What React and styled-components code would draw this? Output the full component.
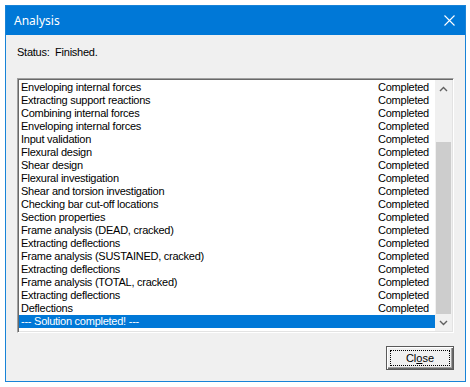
import React from "react"
import styled, { createGlobalStyle } from "styled-components"

const GlobalStyle = createGlobalStyle`
  html, body {
    margin: 0;
    background: #ffffff;
  }
  body {
    padding: 5px;
  }
`

const Window = styled.div`
  width: 461px;
  height: 377px;
  box-sizing: border-box;
  border: 1px solid #1883d7;
  background: #f0f0f0;
  display: flex;
  flex-direction: column;
  font-family: "Liberation Sans", Arial, sans-serif;
  font-size: 11px;
  letter-spacing: -0.25px;
  color: #000;
`

const TitleBar = styled.div`
  height: 29px;
  flex: none;
  background: #0078d7;
  color: #fff;
  display: flex;
  align-items: center;
  justify-content: space-between;
  padding: 0 10px 0 8px;
  font-family: "Noto Sans", sans-serif;
  font-size: 12px;
  letter-spacing: 0;

  svg {
    display: block;
  }
`

const Body = styled.div`
  flex: 1;
  display: flex;
  flex-direction: column;
  padding: 11px 11px 11px 11px;
`

const Status = styled.div`
  height: 13px;
  line-height: 13px;
  white-space: pre;
  margin-bottom: 19px;
`

const ListBox = styled.div`
  height: 255px;
  box-sizing: border-box;
  border-style: solid;
  border-width: 1px;
  border-color: #a0a0a0 #ffffff #ffffff #a0a0a0;
  box-shadow: inset 1px 1px 0 #696969, inset -1px -1px 0 #e3e3e3;
  padding: 1px;
  display: flex;
  background: #fff;
`

const Rows = styled.div`
  flex: 1;
  padding-top: 1px;
  display: flex;
  flex-direction: column;
`

const Row = styled.div`
  height: 13px;
  line-height: 13px;
  display: flex;
  justify-content: space-between;
  padding: 0 6px 0 2px;
  white-space: pre;
  background: ${p => (p.$selected ? "#0078d7" : "transparent")};
  color: ${p => (p.$selected ? "#fff" : "#000")};
`

const ScrollBar = styled.div`
  width: 17px;
  background: #f0f0f0;
  display: flex;
  flex-direction: column;
`

const Arrow = styled.div`
  height: 17px;
  display: flex;
  align-items: center;
  justify-content: center;
`

const Track = styled.div`
  flex: 1;
  display: flex;
  flex-direction: column;
  justify-content: flex-end;
`

const Thumb = styled.div`
  height: 172px;
  margin: 0 1px;
  background: #cdcdcd;
`

const Footer = styled.div`
  margin-top: auto;
  display: flex;
  justify-content: flex-end;
`

const Button = styled.button`
  width: 68px;
  height: 24px;
  box-sizing: border-box;
  border: 1px solid #5a5a5a;
  box-shadow: inset 1px 1px 0 #ffffff, inset -1px -1px 0 #696969,
    inset -2px -2px 0 #a0a0a0;
  background: #f0f0f0;
  padding: 3px;
  font: inherit;
  color: #000;

  span {
    display: flex;
    height: 100%;
    align-items: center;
    justify-content: center;
    border: 1px dotted #000;
    box-sizing: border-box;
  }

  u {
    text-underline-offset: 1px;
  }
`

const rows = [
  "Enveloping internal forces",
  "Extracting support reactions",
  "Combining internal forces",
  "Enveloping internal forces",
  "Input validation",
  "Flexural design",
  "Shear design",
  "Flexural investigation",
  "Shear and torsion investigation",
  "Checking bar cut-off locations",
  "Section properties",
  "Frame analysis (DEAD, cracked)",
  "Extracting deflections",
  "Frame analysis (SUSTAINED, cracked)",
  "Extracting deflections",
  "Frame analysis (TOTAL, cracked)",
  "Extracting deflections",
  "Deflections",
]

const Chevron = ({ up }) => (
  <svg width="9" height="6" viewBox="0 0 9 6">
    <path
      d={up ? "M1 5 L4.5 1.5 L8 5" : "M1 1 L4.5 4.5 L8 1"}
      fill="none"
      stroke="#606060"
      strokeWidth="1.4"
    />
  </svg>
)

export default function App() {
  return (
    <>
      <GlobalStyle />
      <Window>
        <TitleBar>
          <span>Analysis</span>
          <svg width="11" height="11" viewBox="0 0 11 11">
            <path d="M0.5 0.5 L10.5 10.5 M10.5 0.5 L0.5 10.5" stroke="#fff" strokeWidth="1.1" />
          </svg>
        </TitleBar>
        <Body>
          <Status>{"Status:  Finished."}</Status>
          <ListBox>
            <Rows>
              {rows.map((r, i) => (
                <Row key={i}>
                  <span>{r}</span>
                  <span>Completed</span>
                </Row>
              ))}
              <Row $selected>
                <span>--- Solution completed! ---</span>
              </Row>
            </Rows>
            <ScrollBar>
              <Arrow>
                <Chevron up />
              </Arrow>
              <Track>
                <Thumb />
              </Track>
              <Arrow>
                <Chevron />
              </Arrow>
            </ScrollBar>
          </ListBox>
          <Footer>
            <Button>
              <span>
                Cl<u>o</u>se
              </span>
            </Button>
          </Footer>
        </Body>
      </Window>
    </>
  )
}
